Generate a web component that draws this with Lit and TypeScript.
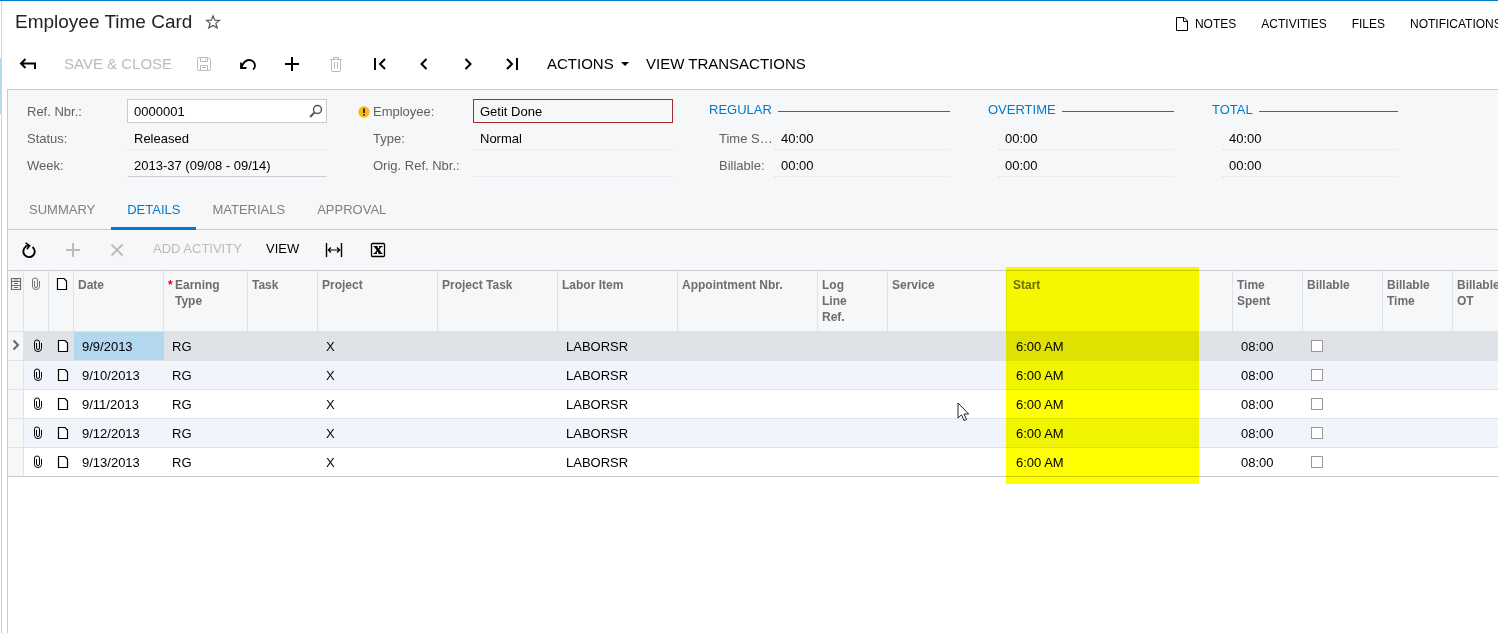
import { LitElement, html, css, svg, nothing } from "lit";
import { customElement, state } from "lit/decorators.js";
import { classMap } from "lit/directives/class-map.js";

interface Entry {
  date: string;
  earning: string;
  project: string;
  labor: string;
  start: string;
  spent: string;
}

const entries: Entry[] = ["9/9/2013", "9/10/2013", "9/11/2013", "9/12/2013", "9/13/2013"].map((date) => ({
  date,
  earning: "RG",
  project: "X",
  labor: "LABORSR",
  start: "6:00 AM",
  spent: "08:00",
}));

const columnWidths = [16, 25, 25, 90, 84, 70, 120, 120, 120, 140, 70, 119, 226, 70, 80, 70, 80];

const icon = (w: number, h: number, body: unknown) =>
  html`<svg width=${w} height=${h} viewBox="0 0 ${w} ${h}" fill="none" stroke="currentColor" aria-hidden="true">${body}</svg>`;

const icons = {
  star: icon(16, 16, svg`<path d="M8 1.8 9.7 6.2 14.4 6.4 10.8 9.4 12.2 14 8 11.4 3.800 14 5.200 9.4 1.6 6.4 6.3 6.2Z" stroke-width="1.2"/>`),
  page: icon(14, 16, svg`<path d="M1.5 1.5H9L12.5 5V14.5H1.5Z"/><path d="M8.5 1.5V5.5H12.5"/>`),
  back: icon(20, 14, svg`<path d="M2 6.500H16V12M6.500 2 2 6.500 6.500 11" stroke-width="2"/>`),
  save: icon(16, 16, svg`<path d="M1.500 2.500Q1.500 1.500 2.500 1.500H12.500L14.500 3.500V13.500Q14.500 14.500 13.500 14.500H2.500Q1.500 14.500 1.500 13.500ZM4.500 1.500V5.500H11.500V1.500M9.500 2.500V4.500M4.500 14.500V9.500H11.500V14.500M6 11.500H10"/>`),
  undo: icon(18, 14, svg`<path d="M2.500 10.500C4 6 6.500 3 10 3C13.500 3 16 5.500 16 8.500C16 10 15.500 11.500 14 12.500" stroke-width="1.8"/><path d="M2 5.500V11H7.500" stroke-width="1.8"/>`),
  plus: icon(16, 16, svg`<path d="M8 1V15M1 8H15" stroke-width="2"/>`),
  trash: icon(14, 16, svg`<path d="M1 3.5H13M4.5 3V1.5H9.5V3M2.5 4V13.5Q2.5 15.5 4 15.5H10Q11.5 15.5 11.5 13.5V4M5.5 6V12.5M8.5 6V12.5"/>`),
  first: icon(14, 14, svg`<path d="M2 1V13M12 2 7 7 12 12" stroke-width="2"/>`),
  prev: icon(14, 14, svg`<path d="M9.5 2 4.5 7 9.5 12" stroke-width="2"/>`),
  next: icon(14, 14, svg`<path d="M4.5 2 9.5 7 4.5 12" stroke-width="2"/>`),
  last: icon(14, 14, svg`<path d="M2 2 7 7 2 12M12 1V13" stroke-width="2"/>`),
  caret: icon(8, 4, svg`<path d="M0 0H8L4 4Z" fill="currentColor" stroke="none"/>`),
  search: icon(14, 14, svg`<circle cx="8.5" cy="5.5" r="4" stroke-width="1.5"/><path d="M5.5 8.5 1 13" stroke-width="2"/>`),
  warning: icon(12, 12, svg`<circle cx="6" cy="6" r="5.7" fill="#fdb813" stroke="none"/><path d="M6 2.5V7M6 8V9.5" stroke="#222" stroke-width="1.8"/>`),
  refresh: icon(16, 18, svg`<path d="M11.500 5.900A5.700 5.700 0 1 1 5.200 5.500" stroke-width="1.900"/><path d="M4.500 1.800 8.600 4.600 6 8.200M4 4.900H8" stroke-width="1.500"/>`),
  add: icon(16, 16, svg`<path d="M8 1V15M1 8H15" stroke-width="2"/>`),
  cross: icon(16, 14, svg`<path d="M2.5 1.5 13.5 12.5M13.5 1.5 2.5 12.5" stroke-width="1.8"/>`),
  fit: icon(18, 16, svg`<path d="M1.5 1V15M16.5 1V15" stroke-width="1.4"/><path d="M3 8H15M6 5.5 3.300 8 6 10.5M12 5.5 14.7 8 12 10.5" stroke-width="1.2"/>`),
  excel: icon(18, 16, svg`<rect x="2.5" y="1.5" width="13" height="13" rx="1" stroke-width="1.300"/><path d="M6.500 4.500 11.500 11.500" stroke-width="2.600"/><path d="M12 4.500 6 11.500" stroke-width="1.300"/><path d="M4.500 4.500H8.500M10 4.500H13.500M4.500 11.500H8M9.500 11.500H13.500"/>`),
  form: icon(12, 14, svg`<path d="M1.5 1.5H10.5V12.5H1.5ZM1.5 4.5H10.5M1.5 8.5H10.5M4 6.5H8M4 10.5H8M4 3H8" stroke-width="1.2"/>`),
  clip: icon(10, 14, svg`<path d="M3.5 4V9Q3.5 10.5 5 10.5T6.5 9V3Q6.5 1 4 1T1.500 3V9.5Q1.5 12.5 5 12.5T8.5 9.5V4"/>`),
  doc: icon(12, 14, svg`<path d="M1.5 1.500H8L10.5 4V12.5H1.5Z" fill="#fff" stroke-width="1.2"/>`),
  marker: icon(8, 12, svg`<path d="M1.5 1.5 6 6 1.5 10.5" stroke-width="2"/>`),
};

@customElement("app-root")
export class AppRoot extends LitElement {
  @state() private tab = "DETAILS";
  @state() private selected = 0;

  static styles = css`
    :host {
      display: block;
      min-height: 100vh;
      box-sizing: border-box;
      overflow: hidden;
      background: #fff;
      color: #000;
      font: 13px/16px "Liberation Sans", Arial, sans-serif;
      border-top: 1px solid #007acc;
    }
    svg { display: block; flex: none; }
    button {
      display: inline-flex;
      align-items: center;
      margin: 0;
      padding: 0;
      border: 0;
      background: none;
      color: inherit;
      font: inherit;
      white-space: nowrap;
    }
    button:disabled { color: #bbb; }
    .shell { display: grid; grid-template-columns: 2px minmax(0, 1fr); min-height: 100vh; }
    .edge { border-right: 1px solid #d2d4d7; }
    .edge::before { content: ""; display: block; height: 56px; margin-top: 57px; background: #b4d7f0; }
    .main { padding-left: 5px; min-width: 0; }
    .head { display: flex; justify-content: space-between; padding: 9px 0 0 8px; height: 37px; box-sizing: border-box; }
    .title { display: flex; align-items: center; gap: 13px; height: 24px; }
    h1 { margin: 0; font: 400 19px/24px "Liberation Sans", Arial, sans-serif; color: #222; }
    .star { color: #555; }
    .links { display: flex; align-items: center; gap: 25px; height: 28px; flex: none; font-size: 12px; }
    .links button { gap: 6px; }
    .cut { width: 88px; }
    .toolbar { display: flex; align-items: center; height: 51px; font-size: 15px; }
    .tool { width: 44px; flex: none; justify-content: center; }
    .saveclose { width: 131px; padding-left: 13px; box-sizing: border-box; }
    .actions { gap: 7px; width: 112px; padding-left: 13px; box-sizing: border-box; }
    .panel { border-left: 1px solid #c9cbce; border-top: 1px solid #c9cbce; min-height: 543px; }
    .form { display: flex; padding: 7px 0 0 19px; height: 99px; box-sizing: border-box; background: #f5f7f9; }
    .area { display: grid; grid-auto-rows: 27px; align-content: start; }
    .field { display: flex; align-items: center; min-width: 0; }
    .label { color: #5f5f5f; width: 100px; padding-top: 2px; white-space: nowrap; overflow: hidden; text-overflow: ellipsis; }
    .area.person { margin-left: 31px; }
    .person .label { padding-left: 15px; width: 115px; box-sizing: border-box; }
    .warn { display: flex; align-items: center; gap: 3px; }
    .person .label.warn { padding-left: 0; }
    .value {
      box-sizing: border-box;
      width: 200px;
      height: 24px;
      padding: 2px 6px 0;
      border: 1px solid transparent;
      border-bottom: 1px dotted #dcdee1;
      background: none;
      font: inherit;
      color: #000;
      outline: none;
      border-radius: 0;
    }
    .value.solid { border-bottom: 1px solid #c9cbce; }
    .value.bad { border: 1px solid #a52a2a; }
    .lookup { display: flex; align-items: center; width: 200px; height: 24px; box-sizing: border-box; border: 1px solid #c9cbce; background: #fff; color: #555; padding-right: 3px; }
    .lookup input { flex: 1; min-width: 0; border: 0; padding: 2px 6px 0; font: inherit; color: #000; background: none; outline: none; }
    .group { margin-left: 36px; width: 241px; }
    .group.mid { margin-left: 38px; width: 186px; }
    .legend { display: flex; align-items: center; gap: 6px; padding-bottom: 2px; color: #007acc; }
    .legend::after { content: ""; flex: 1; height: 1px; background: #007acc; margin-top: 3px; }
    .group .label { width: 55px; margin-left: 10px; }
    .group .value { flex: 1; width: auto; min-width: 0; }
    .group.mid .value { margin-left: 10px; }
    .tabs { display: flex; height: 41px; padding-left: 5px; background: #f5f7f9; border-bottom: 1px solid #c9cbce; box-sizing: border-box; color: #808080; }
    .tab { padding: 3px 16px 0; height: 41px; box-sizing: border-box; border-bottom: 3px solid transparent; }
    .tab.on { color: #007acc; border-bottom-color: #007acc; }
    .gridbar { display: flex; align-items: center; height: 40px; padding-left: 13px; background: #f5f7f9; }
    .gridbar .tool { justify-content: flex-start; }
    .addact { width: 113px; padding-bottom: 2px; }
    .view { width: 59px; padding-bottom: 2px; }
    .gridbox { position: relative; }
    table { table-layout: fixed; width: 1525px; min-width: 100%; border-collapse: separate; border-spacing: 0; border-top: 1px solid #c9cbce; border-bottom: 1px solid #c9cbce; }
    th {
      height: 61px;
      padding: 6px 4px 0;
      box-sizing: border-box;
      vertical-align: top;
      text-align: left;
      font: 700 12px/16px "Liberation Sans", Arial, sans-serif;
      color: #6e6e6e;
      background: #f5f7f9;
      border-right: 1px solid #dfe2e6;
      border-bottom: 1px solid #dfe2e6;
    }
    th.ico { padding: 6px 0 0 2px; }
    th.ico.attach, th.ico.note { padding-left: 7px; }
    th.note { color: #000; }
    th.start { padding-left: 6px; }
    .narrow { display: block; width: 48px; }
    .req { display: grid; grid-template-columns: 7px 48px; }
    .required { color: #e00; }
    td { height: 29px; padding: 2px 8px 0; box-sizing: border-box; border-bottom: 1px solid #dfe2e6; white-space: nowrap; }
    tr:last-child td { border-bottom: 0; height: 28px; }
    td.mark { padding: 0 0 2px 4px; background: #f5f7f9; border-right: 1px solid #dfe2e6; color: #666; }
    td.ico { padding: 0 0 0 9px; }
    td.ico.note { padding-left: 8px; }
    tr.alt td:not(.mark) { background: #f1f4fa; }
    tr.sel td:not(.mark) { background: #dfe2e7; }
    tr.sel td.date { background: #b4d7f0; }
    td.start { padding-left: 9px; }
    td.tick { padding-top: 0; }
    .check { appearance: none; display: block; width: 12px; height: 12px; margin: 0; border: 1px solid #999; background: #fff; }
    .highlight { position: absolute; left: 998px; top: -3px; bottom: -7px; width: 193px; background: #ff0; mix-blend-mode: multiply; pointer-events: none; }
    .cursor { position: absolute; left: 949px; top: 132px; }
  `;

  private tool(name: keyof typeof icons, label: string, disabled = false) {
    return html`<button class="tool" aria-label=${label} ?disabled=${disabled}>${icons[name]}</button>`;
  }

  private field(id: string, label: string, value: string, kind = "") {
    return html`<div class="field">
      ${label ? html`<label class="label" for=${id}>${label}</label>` : nothing}
      <input id=${id} class="value ${kind}" aria-label=${label || id} readonly .value=${value} />
    </div>`;
  }

  private row(e: Entry, i: number) {
    return html`<tr class=${classMap({ sel: i === this.selected, alt: i % 2 === 1 })} @click=${() => (this.selected = i)}>
      <td class="mark">${i === this.selected ? icons.marker : nothing}</td>
      <td class="ico">${icons.clip}</td>
      <td class="ico note">${icons.doc}</td>
      <td class="date">${e.date}</td>
      <td>${e.earning}</td>
      <td></td>
      <td>${e.project}</td>
      <td></td>
      <td>${e.labor}</td>
      <td></td><td></td><td></td>
      <td class="start">${e.start}</td>
      <td>${e.spent}</td>
      <td class="tick"><input class="check" type="checkbox" aria-label="Billable ${e.date}" /></td>
      <td></td><td></td>
    </tr>`;
  }

  render() {
    return html`<div class="shell">
      <div class="edge"></div>
      <main class="main">
        <header class="head">
          <div class="title"><h1>Employee Time Card</h1><button class="star" aria-label="Add to favorites">${icons.star}</button></div>
          <nav class="links">
            <button>${icons.page}NOTES</button><button>ACTIVITIES</button><button>FILES</button><button class="cut">NOTIFICATIONS</button>
          </nav>
        </header>
        <div class="toolbar">
          ${this.tool("back", "Back")}
          <button class="saveclose" disabled>SAVE &amp; CLOSE</button>
          ${this.tool("save", "Save", true)} ${this.tool("undo", "Undo")} ${this.tool("plus", "Add")}
          ${this.tool("trash", "Delete", true)} ${this.tool("first", "First")} ${this.tool("prev", "Previous")}
          ${this.tool("next", "Next")} ${this.tool("last", "Last")}
          <button class="actions">ACTIONS ${icons.caret}</button>
          <button>VIEW TRANSACTIONS</button>
        </div>
        <section class="panel">
          <div class="form">
            <div class="area">
              <div class="field">
                <label class="label" for="ref">Ref. Nbr.:</label>
                <div class="lookup"><input id="ref" .value=${"0000001"} /><button aria-label="Look up">${icons.search}</button></div>
              </div>
              ${this.field("status", "Status:", "Released")}
              ${this.field("week", "Week:", "2013-37 (09/08 - 09/14)", "solid")}
            </div>
            <div class="area person">
              <div class="field">
                <label class="label warn" for="employee">${icons.warning}Employee:</label>
                <input id="employee" class="value bad" .value=${"Getit Done"} />
              </div>
              ${this.field("type", "Type:", "Normal")} ${this.field("orig", "Orig. Ref. Nbr.:", "")}
            </div>
            <div class="area group">
              <div class="legend">REGULAR</div>
              ${this.field("regular-spent", "Time Spent:", "40:00")} ${this.field("regular-billable", "Billable:", "00:00")}
            </div>
            <div class="area group mid">
              <div class="legend">OVERTIME</div>
              ${this.field("overtime-spent", "", "00:00")} ${this.field("overtime-billable", "", "00:00")}
            </div>
            <div class="area group mid">
              <div class="legend">TOTAL</div>
              ${this.field("total-spent", "", "40:00")} ${this.field("total-billable", "", "00:00")}
            </div>
          </div>
          <div class="tabs" role="tablist">
            ${["SUMMARY", "DETAILS", "MATERIALS", "APPROVAL"].map(
              (t) => html`<button role="tab" class=${classMap({ tab: true, on: t === this.tab })} @click=${() => (this.tab = t)}>${t}</button>`
            )}
          </div>
          <div class="gridbar">
            ${this.tool("refresh", "Refresh")} ${this.tool("add", "Add row", true)} ${this.tool("cross", "Delete row", true)}
            <button class="addact" disabled>ADD ACTIVITY</button>
            <button class="view">VIEW</button>
            ${this.tool("fit", "Fit to screen")} ${this.tool("excel", "Export to Excel")}
          </div>
          <div class="gridbox">
            <table>
              <colgroup>${columnWidths.map((w) => html`<col style="width:${w}px" />`)}</colgroup>
              <thead>
                <tr>
                  <th class="ico">${icons.form}</th><th class="ico attach">${icons.clip}</th><th class="ico note">${icons.doc}</th>
                  <th>Date</th>
                  <th><span class="req"><span class="required">*</span><span>Earning Type</span></span></th>
                  <th>Task</th><th>Project</th><th>Project Task</th><th>Labor Item</th><th>Appointment Nbr.</th>
                  <th><span class="narrow">Log<br />Line<br />Ref.</span></th>
                  <th>Service</th><th class="start">Start</th>
                  <th><span class="narrow">Time Spent</span></th>
                  <th>Billable</th><th><span class="narrow">Billable Time</span></th><th><span class="narrow">Billable OT</span></th>
                </tr>
              </thead>
              <tbody>${entries.map((e, i) => this.row(e, i))}</tbody>
            </table>
            <div class="highlight"></div>
            <svg class="cursor" width="13" height="20" viewBox="0 0 13 20" aria-hidden="true">
              <path d="M1 1V16L4.5 12.8 7 18.5 9.5 17.5 7 12H11.7Z" fill="#fff" stroke="#222" />
            </svg>
          </div>
        </section>
      </main>
    </div>`;
  }
}
